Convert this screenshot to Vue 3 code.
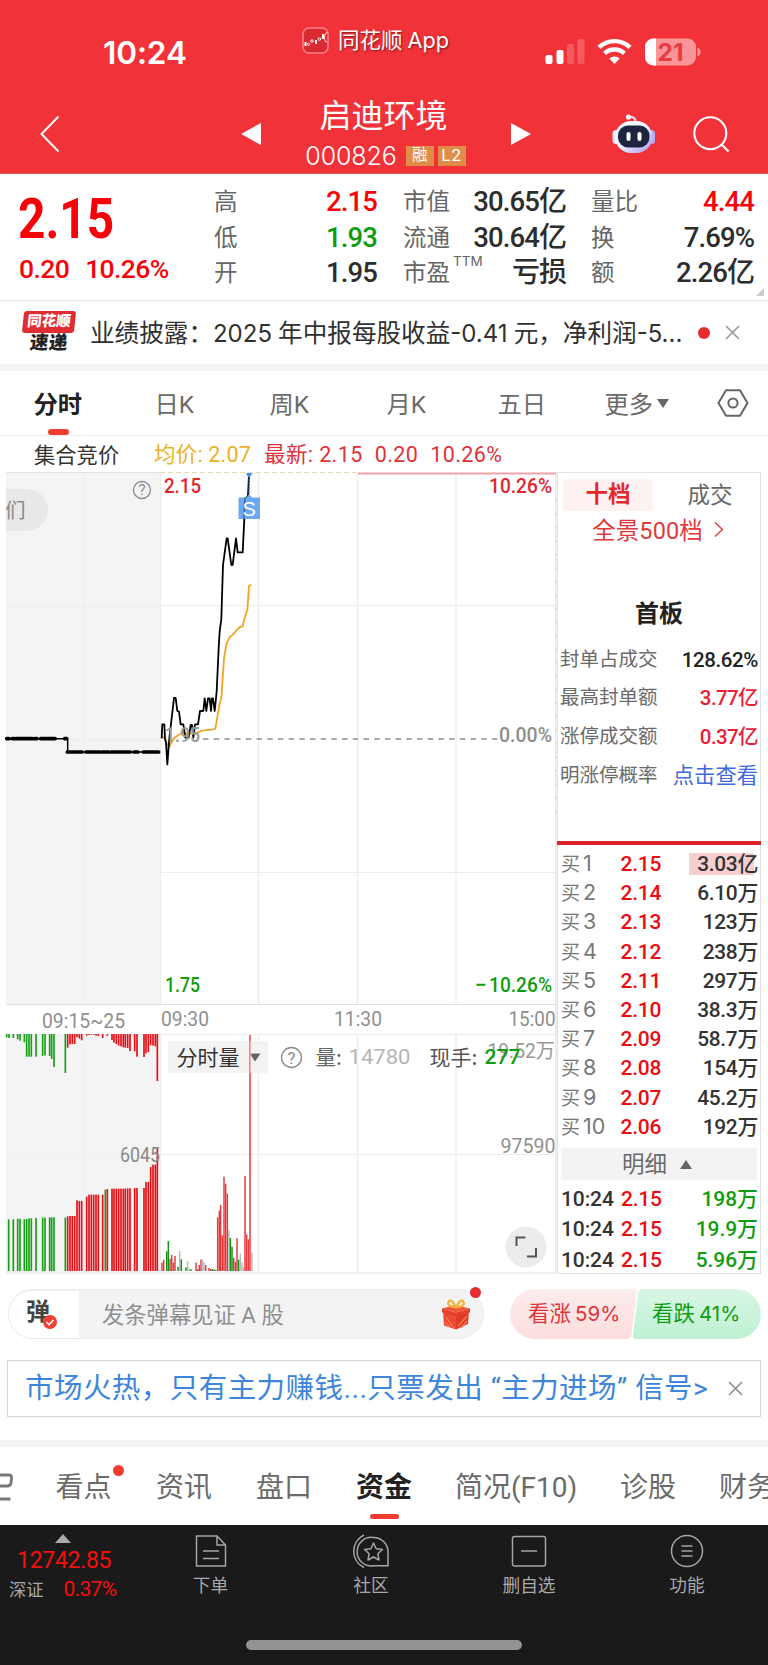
<script setup>
const quoteCols = [
  [
    { k: '高', v: '2.15', c: 'up' },
    { k: '低', v: '1.93', c: 'down' },
    { k: '开', v: '1.95', c: '' },
  ],
  [
    { k: '市值', v: '30.65', u: '亿', c: '' },
    { k: '流通', v: '30.64', u: '亿', c: '' },
    { k: '市盈', sup: 'TTM', v: '', u: '亏损', c: '' },
  ],
  [
    { k: '量比', v: '4.44', c: 'up' },
    { k: '换', v: '7.69%', c: '' },
    { k: '额', v: '2.26', u: '亿', c: '' },
  ],
]

const sealRows = [
  { k: '封单占成交', v: '128.62%', c: '' },
  { k: '最高封单额', v: '3.77亿', c: 'rose' },
  { k: '涨停成交额', v: '0.37亿', c: 'rose' },
  { k: '明涨停概率', v: '点击查看', c: 'link' },
]

const bids = [
  ['1', '2.15', '3.03亿'],
  ['2', '2.14', '6.10万'],
  ['3', '2.13', '123万'],
  ['4', '2.12', '238万'],
  ['5', '2.11', '297万'],
  ['6', '2.10', '38.3万'],
  ['7', '2.09', '58.7万'],
  ['8', '2.08', '154万'],
  ['9', '2.07', '45.2万'],
  ['10', '2.06', '192万'],
]

const trades = [
  ['10:24', '2.15', '198万'],
  ['10:24', '2.15', '19.9万'],
  ['10:24', '2.15', '5.96万'],
]

// Chart samples are stored in third-of-a-pixel units: [x, y, colour key]
const fills = { r: '#e60f14', g: '#17a017', a: '#b9b9b9', v: '#e8383c', d: '#149014' }

const unmatched = [
  [20, 232, 'g'], [27, 234, 'g'], [40, 234, 'g'], [53, 238, 'g'], [60, 242, 'g'], [73, 247, 'g'],
  [80, 290, 'g'], [87, 290, 'g'], [94, 290, 'g'], [108, 290, 'g'], [128, 288, 'g'], [135, 286, 'g'],
  [149, 288, 'g'], [155, 297, 'g'], [162, 321, 'g'], [196, 339, 'g'],
  [203, 263, 'r'], [210, 253, 'r'], [217, 252, 'r'], [224, 252, 'r'], [231, 231, 'r'], [238, 236, 'r'], [245, 241, 'r'],
  [260, 227, 'r'], [267, 225, 'r'], [274, 224, 'r'], [281, 224, 'r'], [288, 227, 'r'], [295, 228, 'r'], [308, 234, 'r'], [322, 227, 'r'],
  [336, 240, 'r'], [342, 248, 'r'], [349, 252, 'r'], [356, 257, 'r'], [363, 259, 'r'], [370, 262, 'r'],
  [376, 263, 'r'], [383, 264, 'r'], [390, 273, 'r'], [404, 274, 'r'], [411, 290, 'r'],
  [432, 291, 'r'], [438, 280, 'r'], [445, 276, 'r'], [452, 256, 'r'], [459, 257, 'r'], [466, 259, 'r'], [472, 363, 'r'],
]

const matched = [
  [26, 778, 'g'], [40, 778, 'g'], [53, 776, 'g'], [60, 776, 'g'], [73, 778, 'g'], [80, 777, 'g'], [87, 775, 'g'],
  [94, 775, 'g'], [108, 774, 'g'], [128, 773, 'g'], [135, 773, 'g'], [149, 772, 'g'], [155, 772, 'g'], [162, 772, 'g'],
  [196, 773, 'g'], [203, 769, 'r'], [210, 768, 'r'], [217, 768, 'r'], [224, 768, 'r'],
  [231, 721, 'r'], [238, 723, 'r'], [245, 723, 'r'], [260, 710, 'r'], [267, 704, 'r'], [274, 704, 'r'],
  [281, 704, 'r'], [288, 704, 'r'], [295, 704, 'r'], [308, 704, 'r'], [316, 689, 'g'], [322, 687, 'r'],
  [336, 686, 'r'], [342, 686, 'r'], [349, 686, 'r'], [356, 686, 'r'], [363, 686, 'r'], [370, 686, 'r'],
  [376, 686, 'r'], [383, 685, 'r'], [390, 685, 'r'], [404, 684, 'r'], [411, 684, 'r'],
  [432, 684, 'r'], [438, 666, 'r'], [445, 666, 'r'], [452, 621, 'r'], [459, 614, 'r'], [466, 614, 'r'], [472, 567, 'r'],
]

const volume = [
  [486, 908, 'v'], [491, 899, 'v'], [500, 874, 'd'], [505, 843, 'd'], [510, 896, 'v'], [515, 885, 'v'], [520, 908, 'v'],
  [525, 888, 'v'], [534, 921, 'd'], [539, 873, 'a'], [544, 898, 'd'], [558, 922, 'd'], [563, 903, 'a'], [568, 925, 'a'],
  [573, 928, 'd'], [588, 908, 'v'], [593, 927, 'v'], [598, 915, 'v'], [603, 899, 'v'], [607, 897, 'a'], [612, 906, 'a'],
  [617, 915, 'v'], [627, 924, 'v'], [632, 927, 'v'], [637, 927, 'd'], [642, 929, 'd'], [647, 929, 'v'],
  [653, 772, 'v'], [658, 752, 'v'], [662, 735, 'v'], [667, 826, 'v'], [672, 650, 'v'], [677, 671, 'v'], [682, 701, 'v'],
  [687, 811, 'a'], [691, 834, 'd'], [696, 860, 'd'], [701, 893, 'v'], [706, 905, 'v'], [711, 835, 'v'], [716, 899, 'd'],
  [721, 881, 'a'], [726, 908, 'a'], [731, 921, 'a'], [735, 648, 'v'], [740, 823, 'v'], [745, 838, 'v'], [750, 225, 'v'],
  [756, 878, 'a'],
]
</script>

<template>
  <div class="page">
    <header class="top">
      <div class="status">
        <div class="clock">10:24</div>
        <div class="source">
          <svg width="27" height="27" viewBox="0 0 27 27">
            <rect x="1" y="1" width="25" height="25" rx="6" fill="#d92a31" stroke="#f98388" stroke-width="1.500" />
            <g fill="#fff">
              <rect x="2.500" y="15" width="2" height="4" />
              <rect x="13" y="13" width="2" height="4" />
              <rect x="20" y="7" width="2" height="5" />
            </g>
            <g fill="none" stroke="#fff" stroke-width="0.900">
              <circle cx="6.500" cy="17.400" r="1.100" />
              <circle cx="10" cy="14" r="1.300" />
              <circle cx="17.400" cy="12" r="1.300" />
              <path d="M25 5.500q-2.400.5-2.400 5.300t2.400 4.200" />
            </g>
          </svg>
          <span>同花顺<i>App</i></span>
        </div>
        <div class="sys">
          <svg width="40" height="26" viewBox="0 0 40 26" fill="#fff">
            <rect x="0.500" y="16" width="7" height="9" rx="2" />
            <rect x="11.500" y="11" width="7" height="14" rx="2" />
            <rect x="22" y="5" width="7" height="20" rx="2" opacity=".2" />
            <rect x="32.500" y="0" width="7" height="25" rx="2" opacity=".2" />
          </svg>
          <svg width="35" height="26" viewBox="0 0 35 26" fill="none">
            <path d="M2 8.400a22.500 22.500 0 0 1 31 0" stroke="#fff" stroke-width="4.300" />
            <path d="M7.600 14.400a14.500 14.500 0 0 1 19.800 0" stroke="#fff" stroke-width="4.300" />
            <path d="M17.500 25l-5.200-5.500a7.500 7.500 0 0 1 10.400 0z" fill="#fff" />
          </svg>
          <svg width="56" height="28" viewBox="0 0 56 28">
            <rect x="0" y="0.500" width="51" height="27" rx="8.500" fill="#f99598" />
            <path d="M11 .5H8.500a8.500 8.500 0 0 0-8.500 8.500v10a8.500 8.500 0 0 0 8.500 8.500H11z" fill="#fff" />
            <path d="M52.500 9.500q3 1.200 3 4.500t-3 4.500z" fill="#f99598" />
            <text x="12.500" y="22.500" class="batt" textLength="26" lengthAdjust="spacingAndGlyphs">21</text>
          </svg>
        </div>
      </div>
      <div class="nav">
        <svg class="back" width="20" height="38" viewBox="0 0 20 38">
          <path d="M18.500 1.500L1.500 19l17 17.500" fill="none" stroke="#fff" stroke-width="2" />
        </svg>
        <svg class="prev" width="20" height="22" viewBox="0 0 20 22"><path d="M20 0v22L0 11z" fill="#fff" /></svg>
        <div class="title">
          <div class="name">启迪环境</div>
          <div class="code"><span>000826</span><b>融</b><b>L2</b></div>
        </div>
        <svg class="next" width="20" height="22" viewBox="0 0 20 22"><path d="M0 0v22l20-11z" fill="#fff" /></svg>
        <svg class="bot" width="44" height="42" viewBox="0 0 44 42">
          <defs>
            <linearGradient id="shell" x1="0" y1="0" x2="1" y2="1">
              <stop offset="0" stop-color="#fff" />
              <stop offset=".5" stop-color="#eef1fd" />
              <stop offset="1" stop-color="#a48dee" />
            </linearGradient>
          </defs>
          <path d="M17 4q6.500-1 6.500 5" fill="none" stroke="#e9eefc" stroke-width="1.800" />
          <circle cx="16.500" cy="4" r="2.600" fill="#fff" />
          <rect x="0.500" y="17" width="7" height="14" rx="3.500" fill="#e3e7fb" />
          <rect x="36" y="17" width="7" height="14" rx="3.500" fill="#b9abf2" />
          <rect x="3" y="8" width="37.500" height="32" rx="16" fill="url(#shell)" />
          <rect x="6" y="12.500" width="31.500" height="22" rx="10" fill="#1c2440" />
          <rect x="14.500" y="19" width="4" height="9" rx="2" fill="#fff" />
          <rect x="25.500" y="19" width="4" height="9" rx="2" fill="#fff" />
        </svg>
        <svg class="search" width="37" height="37" viewBox="0 0 37 37" fill="none" stroke="#fff" stroke-width="2.100">
          <circle cx="17.300" cy="17.300" r="16" />
          <path d="M28.500 28.500l7 7" />
        </svg>
      </div>
    </header>

    <section class="quote">
      <div class="last">
        <div class="price">2.15</div>
        <div class="chg"><span>0.20</span><span>10.26%</span></div>
      </div>
      <div v-for="(col, i) in quoteCols" :key="i" class="qcol">
        <div v-for="r in col" :key="r.k" class="qrow">
          <span class="qk">{{ r.k }}<sup v-if="r.sup">{{ r.sup }}</sup></span>
          <span class="qv" :class="r.c">{{ r.v }}<em v-if="r.u">{{ r.u }}</em></span>
        </div>
      </div>
      <i class="corner"></i>
    </section>

    <section class="news">
      <div class="badge">
        <span class="badge-a">同花顺</span>
        <span class="badge-b">速递</span>
      </div>
      <p>业绩披露：<span>2025</span> 年中报每股收益<span>-0.41</span> 元，净利润<span>-5...</span></p>
      <i class="dot"></i>
      <svg width="15" height="15" viewBox="0 0 15 15"><path d="M1 1l13 13M14 1L1 14" stroke="#999" stroke-width="1.600" /></svg>
    </section>

    <nav class="periods">
      <span class="on">分时</span>
      <span>日K</span>
      <span>周K</span>
      <span>月K</span>
      <span>五日</span>
      <span>更多<i class="caret"></i></span>
      <svg width="32" height="28" viewBox="0 0 32 28" fill="none" stroke="#666" stroke-width="2">
        <path d="M9 1.200h14L30.500 14 23 26.800H9L1.500 14z" stroke-linejoin="round" />
        <circle cx="16" cy="14" r="4.600" />
      </svg>
    </nav>

    <div class="legend">
      <span class="auction">集合竞价</span>
      <span class="avg">均价: 2.07</span>
      <span class="now">最新: 2.15</span>
      <span class="now">0.20</span>
      <span class="now">10.26%</span>
    </div>

    <section class="main">
      <svg class="chart" width="557" height="803" viewBox="0 472 557 803">
        <rect x="6" y="473" width="154" height="532" fill="#f4f4f4" />
        <rect x="6" y="1034" width="154" height="238" fill="#f4f4f4" />
        <g stroke="#ececec" stroke-width="1.200" fill="none">
          <path d="M84 473V1004M84 1034V1272M6 607H160M6 740H160M10 1155H160" stroke="#eeeeee" />
          <path d="M160.500 473V1004M258.500 473V1004M357.500 473V1004M456 473V1004" />
          <path d="M160.500 1034V1272M258.500 1034V1272M357.500 1034V1272M456 1034V1272" />
          <path d="M160 605.500H556M160 872.500H556M6 1034.500H556M160 1154.500H556" />
          <path d="M6 1004.500H556M6 1273H556M6 472.500H160M556 472V1273" stroke="#e2e2e2" />
        </g>
        <path d="M160 472.500H358" stroke="#e3ddb4" stroke-width="1.200" stroke-dasharray="5 3" />
        <path d="M358 473.500H556" stroke="#f3a3a6" stroke-width="2" />
        <path d="M203 739H499" stroke="#8f8f8f" stroke-width="1.400" stroke-dasharray="5.500 5.200" />
        <path d="M555.500 500v320" stroke="#eab5b5" stroke-width="1" stroke-dasharray="1.500 12" />

        <path d="M6 489H27a21 21 0 0 1 0 42H6z" fill="#e8e8e8" />
        <text x="5" y="518" class="cjk" font-size="20.500" fill="#8a8a8a">们</text>
        <circle cx="142" cy="490" r="8.500" fill="none" stroke="#8b8b8b" stroke-width="1.300" />
        <text x="142" y="495.300" class="num" font-size="15" fill="#8b8b8b" text-anchor="middle">?</text>

        <g transform="translate(0 465) scale(0.333333)" fill="none" stroke-linejoin="round">
          <path d="M18 821H203V861H478" stroke="#000" stroke-width="4.500" />
          <path d="M20 821h7M37 821h5M48 821h50M105 821h6M122 821h20M145 821h20M194 821h6" stroke="#000" stroke-width="11" stroke-linecap="round" />
          <path d="M202 861h44M258 861h42M306 861h20M333 861h58M402 861h12M430 861h18M452 861h24" stroke="#000" stroke-width="11" stroke-linecap="round" />
          <path
            d="M485 815L492 818 500 835 508 846 520 822 535 810 550 803 565 806 590 805 605 797 640 793 646 791 660 712 664 700 672 580 680 535 690 515 700 508 708 497 720 486 728 484 735 455 742 435 747 363 754 359"
            stroke="#f3a626" stroke-width="5.500" />
          <path
            d="M485 820L487 778H493L495 820 498 832 502 898 508 820 522 699H527L532 738 537 740 542 778H550L556 818H566L572 780H576L580 818 585 778H594L600 738H610L614 700 619 738 624 700H629L633 738 636 700H639L644 738 650 680 656 550 659 500 664 462 669 300 680 220H683L694 300H698L708 220 713 262H728L733 160 738 100 744 92 747 30"
            stroke="#000" stroke-width="5.400" />
          <path d="M747 92V30" stroke="#2a6fd6" stroke-width="4" stroke-dasharray="5 4" />
          <path d="M738 24H757L750 36H744z" fill="#4a8ee8" />
        </g>
        <path d="M238.500 497.500h7.500l3-3 3 3h8v21.500h-21.500z" fill="#6ca8f2" />
        <path d="M245 497L243.800 519" stroke="#234" stroke-width="1.300" opacity=".6" />
        <text x="249.200" y="515.500" class="sans" font-size="20" fill="#fff" text-anchor="middle">S</text>

        <g class="num" font-weight="500" font-size="20.500" fill="#8d8d8d">
          <text x="165" y="742" textLength="35" lengthAdjust="spacingAndGlyphs" fill="#999">1.95</text>
          <text x="499" y="742" textLength="53" lengthAdjust="spacingAndGlyphs">0.00%</text>
        </g>
        <g class="num" font-weight="500" font-size="21">
          <text x="164" y="493" fill="#e1262d" textLength="37" lengthAdjust="spacingAndGlyphs">2.15</text>
          <text x="489" y="493" fill="#e1262d" textLength="63" lengthAdjust="spacingAndGlyphs">10.26%</text>
          <text x="165" y="992" fill="#109c10" textLength="35" lengthAdjust="spacingAndGlyphs">1.75</text>
          <text x="475" y="992" fill="#109c10" textLength="12" lengthAdjust="spacingAndGlyphs">−</text>
          <text x="489" y="992" fill="#109c10" textLength="63" lengthAdjust="spacingAndGlyphs">10.26%</text>
        </g>
        <g class="num" font-size="21" fill="#8f8f8f">
          <text x="42" y="1028" textLength="83" lengthAdjust="spacingAndGlyphs">09:15~25</text>
          <text x="161" y="1026" textLength="48" lengthAdjust="spacingAndGlyphs">09:30</text>
          <text x="334" y="1026" textLength="48" lengthAdjust="spacingAndGlyphs">11:30</text>
          <text x="508.500" y="1026" textLength="47" lengthAdjust="spacingAndGlyphs">15:00</text>
          <text x="500.500" y="1153" textLength="55" lengthAdjust="spacingAndGlyphs">97590</text>
        </g>

        <rect x="168" y="1041" width="100" height="32" fill="#f3f3f3" />
        <text x="176.500" y="1064.500" class="cjk" font-size="21" fill="#333">分时量</text>
        <path d="M249.500 1053.500h11l-5.500 8z" fill="#666" />

        <g transform="translate(0 960) scale(0.333333)">
          <rect v-for="b in unmatched" :key="'u' + b[0]" :x="b[0] - 2.500" y="222" width="5" :height="b[1] - 222" :fill="fills[b[2]]" />
          <rect v-for="b in matched" :key="'m' + b[0]" :x="b[0] - 2.500" :y="b[1]" width="5" :height="933 - b[1]" :fill="fills[b[2]]" />
          <rect v-for="b in volume" :key="'v' + b[0]" :x="b[0] - 2.200" :y="b[1]" width="4.400" :height="933 - b[1]" :fill="fills[b[2]]" />
        </g>
        <rect x="249.500" y="1041" width="2" height="32" fill="#fff" opacity=".45" />
        <text x="120" y="1162" class="num" font-size="19.500" fill="#888" textLength="40" lengthAdjust="spacingAndGlyphs">6045</text>

        <circle cx="291.500" cy="1057.500" r="10" fill="none" stroke="#8b8b8b" stroke-width="1.300" />
        <text x="291.500" y="1063.500" class="num" font-size="17" fill="#8b8b8b" text-anchor="middle">?</text>
        <text x="315.500" y="1064.500" class="cjk" font-size="20.500" fill="#666">量:</text>
        <text x="348.500" y="1064" class="num" font-size="21" fill="#b5b5b5" textLength="62" lengthAdjust="spacingAndGlyphs">14780</text>
        <text x="429.500" y="1064.500" class="cjk" font-size="21" fill="#555">现手:</text>
        <text x="487.500" y="1058" class="mix" font-size="20.500" fill="#999" textLength="67.500" lengthAdjust="spacingAndGlyphs">19.52万</text>
        <text x="484.500" y="1064" class="num" font-size="21" font-weight="500" fill="#109c10" textLength="36" lengthAdjust="spacingAndGlyphs">277</text>
        <circle cx="526" cy="1247" r="20.500" fill="#ececec" />
        <path d="M516.500 1246V1237.500H525.500M527 1256.500H536V1248" fill="none" stroke="#555" stroke-width="2" />
      </svg>

      <aside class="book">
        <div class="btabs"><span class="on">十档</span><span>成交</span></div>
        <div class="pano">
          全景500档
          <svg width="10" height="17" viewBox="0 0 10 17"><path d="M1 1.500l7.500 7L1 15.500" fill="none" stroke="#e2393e" stroke-width="1.400" /></svg>
        </div>
        <div class="board">首板</div>
        <div class="seals">
          <div v-for="s in sealRows" :key="s.k"><span>{{ s.k }}</span><b :class="s.c">{{ s.v }}</b></div>
        </div>
        <div class="bids">
          <div v-for="b in bids" :key="b[0]" class="brow" :class="{ hot: b[0] === '1' }">
            <span>买<i>{{ b[0] }}</i></span><b>{{ b[1] }}</b><em>{{ b[2] }}</em>
          </div>
        </div>
        <div class="detail">明细<i></i></div>
        <div class="trades">
          <div v-for="(t, i) in trades" :key="i"><span>{{ t[0] }}</span><b>{{ t[1] }}</b><em>{{ t[2] }}</em></div>
        </div>
      </aside>
    </section>

    <section class="social">
      <div class="danmu">
        <div class="dan">弹
          <svg width="14" height="14" viewBox="0 0 14 14">
            <circle cx="7" cy="7" r="7" fill="#ee4035" />
            <path d="M3.500 7l2.600 2.700L10.500 5" fill="none" stroke="#fff" stroke-width="1.600" />
          </svg>
        </div>
        <div class="hint">发条弹幕见证 A 股</div>
        <svg class="gift" width="30" height="32" viewBox="0 0 30 32">
          <path d="M2 12l13 3.500V31.500L3 27.500z" fill="#ee4a33" />
          <path d="M28 12l-13 3.500V31.500l12-5.500z" fill="#e03a27" />
          <path d="M1 10.500L14 7l15 3.500-14 4z" fill="#f0573b" />
          <path d="M1 10.500l14 4 14-4v4l-14 4-14-4z" fill="#e5402b" />
          <path d="M5 19l8 11M17 28l9-10M4 24l5 5M20 30l6-7" stroke="#f57d58" stroke-width="1.200" />
          <path d="M15 9q-9 0-7.500-5t7.500 5q6-10 7.500-5T15 9" fill="none" stroke="#efb53f" stroke-width="2.300" />
        </svg>
        <i class="dot"></i>
      </div>
      <div class="votes">
        <svg width="251" height="50" viewBox="2 0 251 50">
          <defs>
            <linearGradient id="bull" x1="0" y1="0" x2="0" y2="1">
              <stop offset="0" stop-color="#fdecec" /><stop offset="1" stop-color="#fcdedd" />
            </linearGradient>
            <linearGradient id="bear" x1="0" y1="0" x2="0" y2="1">
              <stop offset="0" stop-color="#d9f6e5" /><stop offset="1" stop-color="#bdf1d3" />
            </linearGradient>
          </defs>
          <path d="M27 0H124.500q4.500 0 4 4l-5 42q-.6 4-4.500 4H27a25 25 0 0 1 0-50z" fill="url(#bull)" />
          <path d="M135 0h93a25 25 0 0 1 0 50H128q-3.500 0-3-3.500L130 4.500q.6-4.500 5-4.500z" fill="url(#bear)" />
        </svg>
        <span class="bull">看涨<i>59%</i></span>
        <span class="bear">看跌<i>41%</i></span>
      </div>
    </section>

    <section class="promo">
      <p>市场火热，只有主力赚钱...只票发出 “主力进场” 信号&gt;</p>
      <svg width="15" height="15" viewBox="0 0 15 15"><path d="M1 1l13 13M14 1L1 14" stroke="#8a8a8a" stroke-width="1.500" /></svg>
    </section>

    <nav class="topics">
      <svg width="14" height="28" viewBox="0 0 14 28"><path d="M0 2H9q3 0 2.500 3.500L11 10q-.5 3-3.500 3H0M0 26H10.500" fill="none" stroke="#777" stroke-width="2.800" /></svg>
      <span>看点<i class="dot"></i></span>
      <span>资讯</span>
      <span>盘口</span>
      <span class="on">资金</span>
      <span>简况(F10)</span>
      <span>诊股</span>
      <span>财务</span>
    </nav>

    <footer class="foot">
      <div class="index">
        <i></i>
        <b>12742.85</b>
        <div><span>深证</span><em>0.37%</em></div>
      </div>
      <div class="act">
        <svg width="32" height="33" viewBox="0 0 32 33">
          <path d="M1.500 1.500H22l8.500 9V31.500h-29zM22 1.500v9h8.500" />
          <path d="M8 16.500h16M8 24h16" />
        </svg>
        <span>下单</span>
      </div>
      <div class="act">
        <svg width="37" height="34" viewBox="0 0 37 34">
          <path d="M20.500 3.500A14.300 14.300 0 1 0 20.500 31.800H35V17.500A14.400 14.400 0 0 0 20.500 3.500z" />
          <path d="M11 1A18 18 0 0 0 11 33.500" />
          <path d="M20.500 9l2.700 5.700 6.200.8-4.500 4.300 1.100 6.200-5.500-3-5.500 3 1.100-6.200-4.500-4.300 6.200-.8z" stroke-linejoin="round" />
        </svg>
        <span>社区</span>
      </div>
      <div class="act">
        <svg width="36" height="33" viewBox="0 0 36 33">
          <rect x="1.500" y="2" width="33" height="29.500" rx="2" />
          <path d="M10 16.500h16" />
        </svg>
        <span>删自选</span>
      </div>
      <div class="act">
        <svg width="34" height="34" viewBox="0 0 34 34">
          <circle cx="17" cy="17" r="15.500" />
          <path d="M11.500 12h11M11.500 17h11M11.500 22h11" />
        </svg>
        <span>功能</span>
      </div>
      <i class="home"></i>
    </footer>
  </div>
</template>

<style>
body { background: #fff; }
</style>

<style scoped>
* { box-sizing: border-box; }
i, em { font-style: normal; }
svg { display: block; flex: none; }
.chart { overflow: visible; }
.page {
  width: 768px; height: 1665px; overflow: hidden; background: #fff; color: #333;
  font-family: Roboto, "Noto Sans CJK SC", sans-serif; white-space: nowrap;
  display: flex; flex-direction: column;
}
.page > * { flex: none; }
.num { font-family: Roboto, sans-serif; }
.cjk { font-family: "Noto Sans CJK SC", sans-serif; }
.mix { font-family: Roboto, "Noto Sans CJK SC", sans-serif; }
.sans { font-family: "Liberation Sans", sans-serif; }
.dot { display: block; width: 12px; height: 12px; border-radius: 50%; background: #e52d30; }

.top { height: 174px; background: #f13238; color: #fff; border-bottom: 1px solid #d8574f; }
.status { height: 94px; display: grid; grid-template-columns: 302px 243px 1fr; }
.clock { padding: 33px 0 0 103px; font: 600 31.500px/40px Inter, sans-serif; letter-spacing: -0.100px; }
.source { display: flex; gap: 9px; padding-top: 27px; font-size: 21.500px; line-height: 27px; text-shadow: 1px 1px 2px rgba(60, 0, 0, .6); }
.source i { font: 21.700px/27px Inter, sans-serif; margin-left: 5px; }
.sys { display: flex; padding-top: 39px; }
.sys svg:nth-child(2) { margin-left: 12px; }
.sys svg:nth-child(3) { margin: -1px 0 0 13px; }
.batt { font: 700 24px Inter, sans-serif; fill: #e93a41; }
.nav { display: flex; height: 79px; align-items: flex-start; }
.back { margin: 21px 0 0 40px; }
.prev { margin: 29px 0 0 181px; }
.title { width: 250px; text-align: center; padding-right: 5px; }
.name { font-size: 32px; line-height: 40px; margin-top: 2px; }
.code { display: flex; justify-content: center; align-items: center; height: 24px; margin-top: 8px; padding-left: 4px; }
.code span { font: 300 25px/24px Inter, sans-serif; letter-spacing: -0.100px; margin-right: 9px; }
.code b { width: 28px; height: 20px; background: #df8d48; font-size: 15.500px; line-height: 19px; font-weight: 400; margin-right: 4px; }
.code b:last-child { margin-right: 0; letter-spacing: 1px; font-size: 17px; }
.next { margin: 29px 0 0 0; }
.bot { margin: 19px 0 0 81px; }
.search { margin: 22px 0 0 37px; }

.quote { position: relative; height: 127px; border-bottom: 1px solid #e6e6e6; display: grid; grid-template-columns: 214px 189px 188px 163px; padding-top: 9px; }
.last { color: #f60208; padding-left: 18px; }
.price { font-weight: 700; font-size: 55px; line-height: 60px; margin-top: 6px; transform: scaleX(.87); transform-origin: 0 0; }
.chg { font-size: 26.500px; font-weight: 500; line-height: 30px; display: flex; gap: 16px; letter-spacing: -0.600px; padding-left: 1px; margin-top: 5px; }
.qcol { padding: 2px 26px 0 0; }
.qcol:nth-child(3) { padding-right: 25px; }
.qcol:nth-child(4) { padding-right: 0; }
.qrow { display: flex; justify-content: space-between; height: 35.600px; line-height: 35.600px; }
.qk { font-size: 23.500px; color: #666; position: relative; }
.qk sup { position: absolute; left: 50px; top: -5px; font: 13.500px/20px Inter, sans-serif; }
.qv { font-size: 27.500px; font-weight: 500; letter-spacing: -0.900px; color: #2d2d2d; margin-top: -1px; }
.qv em { font-size: 28px; line-height: 20px; letter-spacing: -1px; }
.qv.up { color: #f60208; }
.qv.down { color: #109c10; }
.corner { position: absolute; right: 4px; bottom: 4px; border: 4.500px solid #ccc; border-left-color: transparent; border-top-color: transparent; }

.news { height: 63px; display: flex; align-items: center; padding-left: 22px; }
.badge { width: 54px; display: flex; flex-direction: column; font-weight: 900; align-items: center; margin-top: -1px; }
.badge-a { height: 22px; line-height: 21px; width: 52px; text-align: center; color: #fff; background: #e02d31; font-size: 14.500px; border-radius: 3px; transform: skewX(-6deg); }
.badge-b { height: 20px; line-height: 20px; font-size: 18.500px; transform: skewX(-6deg); letter-spacing: .5px; color: #222; }
.news p { margin: -4px 0 0 14px; width: 608px; font-size: 24.600px; color: #303030; }
.news p span { font-family: Inter, sans-serif; font-size: 24px; }
.news svg { margin-left: 15px; }

.periods { height: 72px; border-top: 7px solid #f4f4f5; border-bottom: 1px solid #ececec; display: grid; grid-template-columns: 121px 115px 117px 111px 107px 112px auto; padding-left: 33.500px; align-items: center; font-size: 24.300px; color: #6b6b6b; }
.periods span { position: relative; line-height: 68px; height: 64px; }
.periods .on { color: #222; font-weight: 700; }
.periods .on::after { content: ""; position: absolute; left: 14px; bottom: 0; width: 21px; height: 6px; border-radius: 3px; background: #f23c30; }
.caret { display: inline-block; border: 6px solid transparent; border-top: 9px solid #666; border-bottom: 0; margin-left: 4px; vertical-align: 5px; }

.legend { height: 36px; display: flex; line-height: 38px; padding-left: 34px; font-size: 21.500px; color: #333; }
.legend .auction { width: 120px; font-size: 21.300px; line-height: 40px; }
.legend .avg { width: 110px; color: #edb126; letter-spacing: .2px; }
.legend .now { color: #dd3238; margin-right: 12px; letter-spacing: .4px; }

.main { display: flex; height: 803px; }
.book { width: 204px; height: 802px; border: 1px solid #e2e2e2; }
.btabs { display: flex; margin: 6px 5px 0; }
.btabs span { width: 90px; height: 32px; line-height: 31px; text-align: center; font-size: 22.500px; color: #666; }
.btabs span:last-child { margin-left: 12px; line-height: 33px; }
.btabs .on { background: #fdf2f1; color: #e3282d; font-weight: 700; }
.pano { display: flex; justify-content: center; align-items: center; gap: 11px; height: 36px; font-size: 23.500px; color: #e2393e; letter-spacing: .1px; padding-right: 2px; }
.board { margin-top: 50px; height: 34px; line-height: 34px; text-align: center; font-size: 24px; font-weight: 600; color: #222; }
.seals { margin: 9.500px 2px 0; height: 200.500px; }
.seals div { height: 38.700px; line-height: 38px; display: flex; justify-content: space-between; }
.seals span { font-size: 19.500px; color: #6a6a6a; }
.seals b { font-size: 20.500px; font-weight: 500; color: #222; letter-spacing: -.4px; }
.seals .rose { color: #ea1e35; letter-spacing: -.6px; }
.seals .link { color: #4169dc; font-weight: 400; font-size: 21.300px; letter-spacing: 0; }
.bids { border-top: 4px solid #dc2329; margin: 0 -1px; padding: 5px 3px 0 4px; height: 307px; }
.brow { height: 29.200px; display: grid; grid-template-columns: 59.500px 50px 1fr; align-items: center; line-height: 29px; }
.brow span { font-size: 19px; color: #777; }
.brow span i { font: 21.500px/20px Inter, sans-serif; margin-left: 3px; }
.brow b, .trades b { font-size: 21px; font-weight: 500; color: #ec0b10; letter-spacing: -0.200px; }
.brow em, .trades em { font-size: 20.900px; font-weight: 500; text-align: right; letter-spacing: -0.300px; }
.brow.hot em { background: linear-gradient(#f8cfd0, #f8cfd0) 18px 3px / 65px 22px no-repeat; }
.detail { margin: 0 3px; height: 32px; background: #f3f3f3; display: flex; align-items: center; justify-content: center; gap: 13px; font-size: 22.500px; color: #6a6a6a; line-height: 30px; padding-right: 4px; }
.detail i { border: 6px solid transparent; border-bottom: 9px solid #666; border-top: 0; }
.trades { padding: 4px 2px 0 3px; }
.trades div { height: 30.300px; line-height: 31px; display: grid; grid-template-columns: 60px 50px 1fr; }
.trades span { font-size: 21px; font-weight: 500; letter-spacing: -.1px; }
.trades em { color: #109c10; letter-spacing: 0; }

.social { display: flex; height: 85px; padding: 14px 7px 0 8px; }
.danmu { position: relative; width: 476px; height: 50px; border: 1.500px solid #ebe9ee; border-radius: 25px; background: #f3f3f4; display: flex; align-items: center; }
.dan { position: relative; width: 70px; height: 47px; border-radius: 24px 0 0 24px; background: #fff; color: #444; font-size: 24px; font-weight: 700; line-height: 43px; padding-left: 17px; }
.dan svg { position: absolute; left: 34px; top: 24px; }
.hint { font-size: 22.300px; color: #8f8f8f; margin: -3px 0 0 23px; flex: 1; }
.gift { margin: -1px 12px 0 0; }
.danmu .dot { position: absolute; right: 2px; top: -3px; width: 11px; height: 11px; }
.votes { position: relative; margin-left: 26px; }
.votes span { position: absolute; top: 0; line-height: 50px; font-size: 21.500px; }
.votes i { font: 20.500px/20px Inter, sans-serif; margin-left: 4px; }
.bull { left: 18px; color: #e0343a; }
.bear { left: 142px; color: #109c10; }

.promo { margin: 0 7px; height: 57px; border: 1.500px solid #d3d5da; display: flex; align-items: center; justify-content: space-between; padding: 0 17px; color: #3d86d9; }
.promo p { margin: 1px 0 0; font-size: 28.500px; line-height: 50px; letter-spacing: .45px; }

.topics { margin-top: 23px; height: 85px; border-top: 7px solid #f4f4f4; display: grid; grid-template-columns: 55.500px 100.500px 100px 100px 99px 165px 99px auto; font-size: 28px; color: #6b6b6b; padding-top: 17px; }
.topics svg { margin-top: 9px; }
.topics span { position: relative; height: 60px; line-height: 47px; }
.topics .dot { position: absolute; left: 57px; top: 1px; width: 11px; height: 11px; background: #f23c30; }
.topics .on { color: #222; font-weight: 700; }
.topics .on::after { content: ""; position: absolute; left: 14px; top: 50px; width: 29px; height: 5px; border-radius: 3px; background: #f23c30; }

.foot { position: relative; height: 140px; background: #1a1a1a; display: grid; grid-template-columns: 131px 159px 162px 154px 162px; color: #a9a9a9; }
.index i { display: block; width: 0; margin: 9px 0 0 55px; border: 8px solid transparent; border-bottom: 9px solid #aaa; border-top: 0; }
.index b { display: block; margin: 4px 0 0 17px; font-size: 23px; font-weight: 400; line-height: 28px; color: #f90d0d; letter-spacing: -0.300px; }
.index div { display: flex; margin: 2px 0 0 9px; gap: 20px; font-size: 17.300px; line-height: 26px; align-items: center; }
.index em { font-size: 21px; color: #f90d0d; letter-spacing: -0.700px; line-height: 20px; margin-top: -2px; }
.act { display: flex; flex-direction: column; align-items: center; padding-top: 9px; font-size: 17.700px; }
.act svg { fill: none; stroke: #a5a5a5; stroke-width: 1.500; height: 34px; }
.act span { line-height: 24px; margin-top: 6px; }
.home { position: absolute; left: 246px; top: 115px; width: 276px; height: 10px; border-radius: 5px; background: #939393; }
</style>
